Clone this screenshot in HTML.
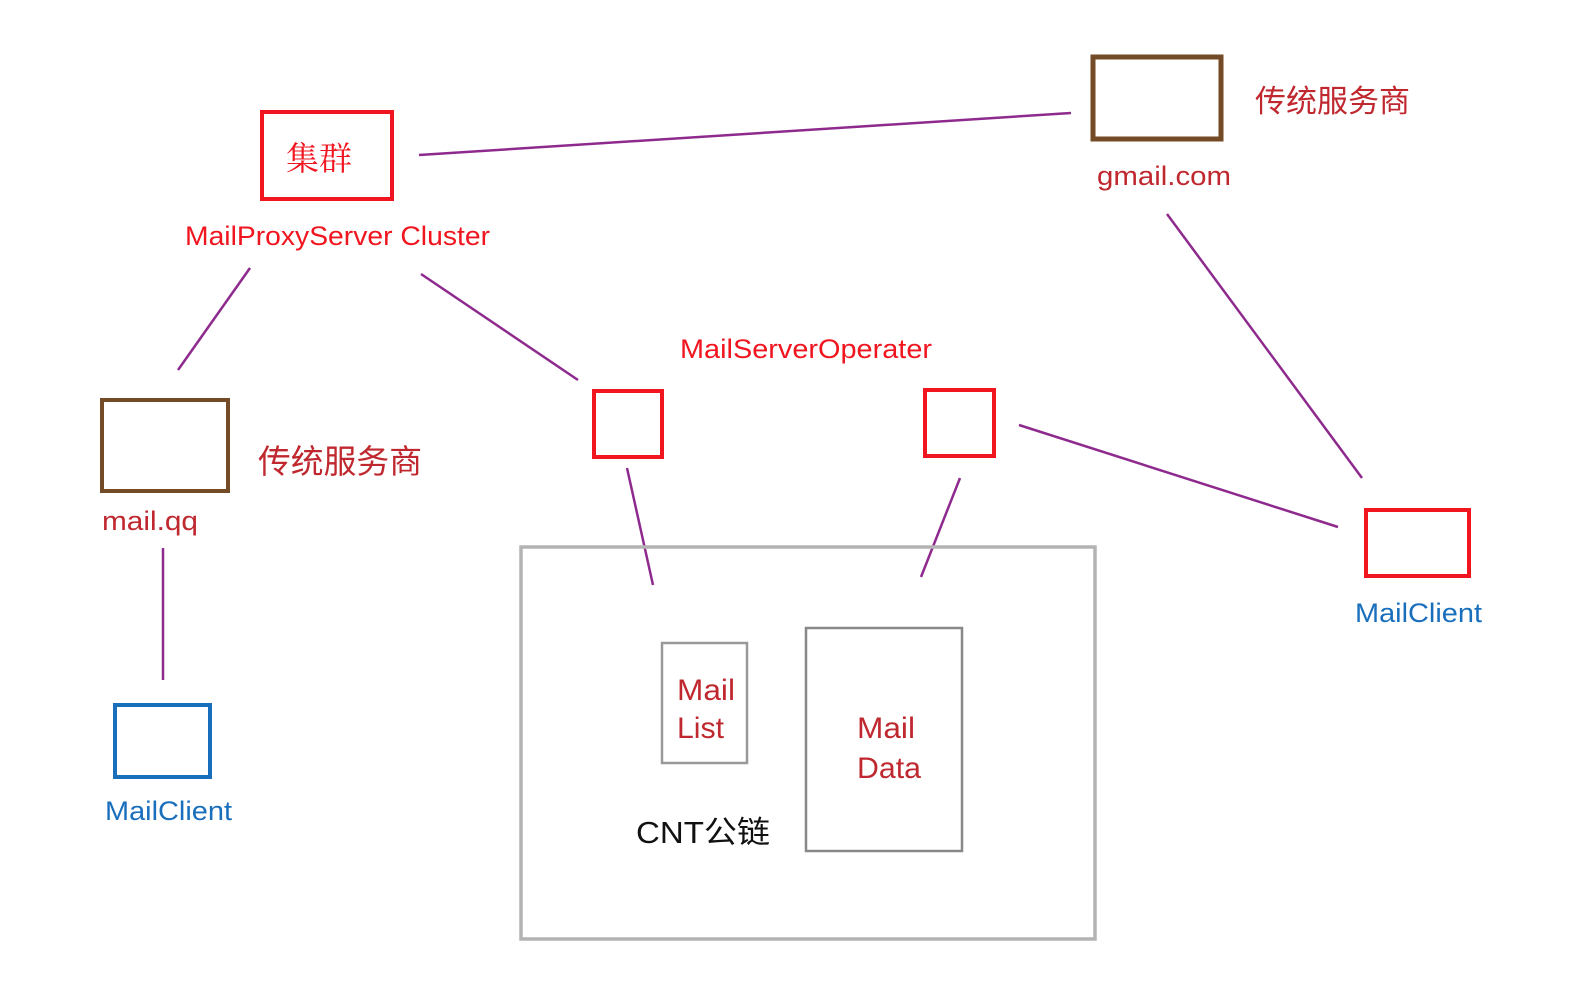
<!DOCTYPE html>
<html><head><meta charset="utf-8"><style>html,body{margin:0;padding:0;background:#fff;width:1574px;height:992px;overflow:hidden}</style></head>
<body>
<svg width="1574" height="992" xmlns="http://www.w3.org/2000/svg" style="display:block">
<g stroke="#8e2a8e" stroke-width="2.5" fill="none">
<line x1="419" y1="155" x2="1071" y2="113"/>
<line x1="1167" y1="214" x2="1362" y2="478"/>
<line x1="250" y1="268" x2="178" y2="370"/>
<line x1="421" y1="274" x2="578" y2="380"/>
<line x1="163" y1="548" x2="163" y2="680"/>
<line x1="627" y1="468" x2="653" y2="585"/>
<line x1="960" y1="478" x2="921" y2="577"/>
<line x1="1019" y1="425" x2="1338" y2="527"/>
</g>
<g fill="none">
<rect x="262" y="112" width="130" height="87" stroke="#f0151f" stroke-width="4"/>
<rect x="1093" y="57" width="128" height="82" stroke="#744b27" stroke-width="5"/>
<rect x="102" y="400" width="126" height="91" stroke="#744b27" stroke-width="4"/>
<rect x="115" y="705" width="95" height="72" stroke="#1a6fbd" stroke-width="4"/>
<rect x="594" y="391" width="68" height="66" stroke="#f0151f" stroke-width="4"/>
<rect x="925" y="390" width="69" height="66" stroke="#f0151f" stroke-width="4"/>
<rect x="1366" y="510" width="103" height="66" stroke="#f0151f" stroke-width="4"/>
<rect x="521" y="547" width="574" height="392" stroke="#b3b3b3" stroke-width="3.5"/>
<rect x="662" y="643" width="85" height="120" stroke="#999" stroke-width="2.5"/>
<rect x="806" y="628" width="156" height="223" stroke="#888" stroke-width="2.5"/>
</g>
<g font-family="Liberation Sans, Noto Sans CJK SC, sans-serif">
<text x="286" y="170" font-size="33" fill="#f0151f" font-family="Noto Serif CJK SC, serif">集群</text>
<text x="185" y="245" font-size="27" fill="#f0151f" textLength="305" lengthAdjust="spacingAndGlyphs">MailProxyServer Cluster</text>
<text x="1255" y="112" font-size="31" fill="#c0282f" textLength="155" lengthAdjust="spacingAndGlyphs">传统服务商</text>
<text x="1097" y="185" font-size="27" fill="#c0282f" textLength="134" lengthAdjust="spacingAndGlyphs">gmail.com</text>
<text x="680" y="358" font-size="27" fill="#f0151f" textLength="252" lengthAdjust="spacingAndGlyphs">MailServerOperater</text>
<text x="258" y="473" font-size="33" fill="#c0282f" textLength="164" lengthAdjust="spacingAndGlyphs">传统服务商</text>
<text x="102" y="530" font-size="27" fill="#c0282f" textLength="96" lengthAdjust="spacingAndGlyphs">mail.qq</text>
<text x="105" y="820" font-size="27" fill="#1a6fbd" textLength="127" lengthAdjust="spacingAndGlyphs">MailClient</text>
<text x="1355" y="622" font-size="27" fill="#1a6fbd" textLength="127" lengthAdjust="spacingAndGlyphs">MailClient</text>
<text x="677" y="700" font-size="30" fill="#c0282f" textLength="58" lengthAdjust="spacingAndGlyphs">Mail</text>
<text x="677" y="738" font-size="30" fill="#c0282f" textLength="47" lengthAdjust="spacingAndGlyphs">List</text>
<text x="857" y="738" font-size="30" fill="#c0282f" textLength="58" lengthAdjust="spacingAndGlyphs">Mail</text>
<text x="857" y="778" font-size="30" fill="#c0282f" textLength="64" lengthAdjust="spacingAndGlyphs">Data</text>
<text x="636" y="843" font-size="31" fill="#111" textLength="134" lengthAdjust="spacingAndGlyphs">CNT公链</text>
</g>
</svg>
</body></html>
